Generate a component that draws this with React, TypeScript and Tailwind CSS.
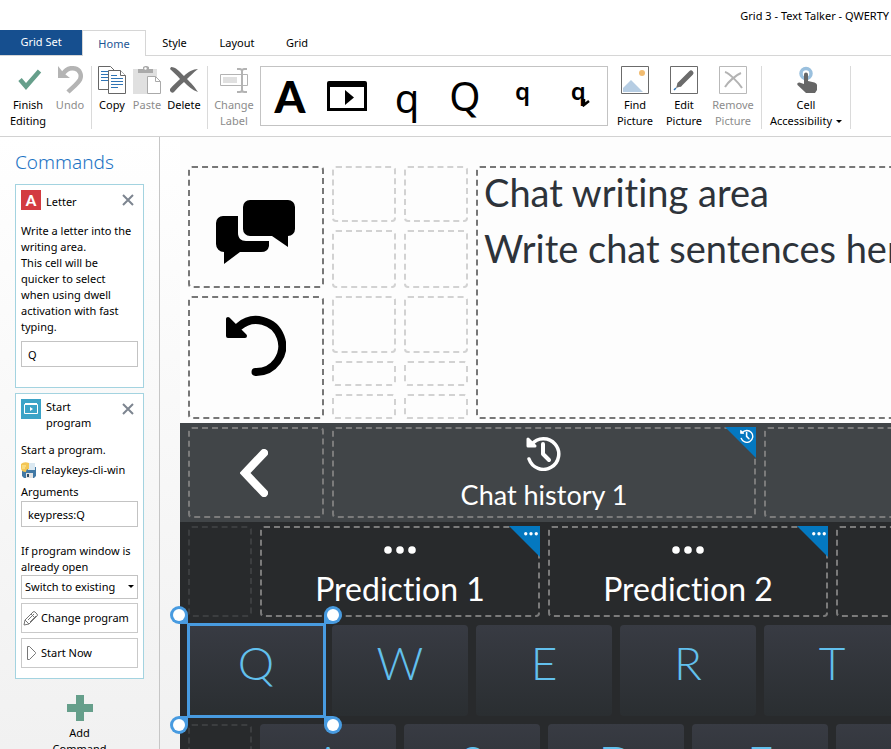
import React from "react";

type IconProps = { className?: string };

const ui = "font-['Noto_Sans','Open_Sans',sans-serif]";
const board = "font-['Lato','Open_Sans',sans-serif] [font-variant-ligatures:none]";

function CheckIcon() {
  return (
    <svg width="28" height="28" viewBox="0 0 28 28" fill="none" aria-hidden="true">
      <path d="M6 13.500l6 7L25.500 5" stroke="#669f8b" strokeWidth="4.500" />
    </svg>
  );
}

function UndoIcon() {
  return (
    <svg width="28" height="28" viewBox="0 0 28 28" fill="none" aria-hidden="true">
      <path d="M2 0v12h12L9.500 8.500 6 5z" fill="#b4b4b4" />
      <path d="M6.500 8.500C10 3 15 1.500 19 2.500c5 1.300 7 6.500 5 11-2 4-7 7.500-12 12.500" stroke="#b4b4b4" strokeWidth="4.500" />
    </svg>
  );
}

function CopyIcon() {
  return (
    <svg width="28" height="28" viewBox="0 0 28 28" fill="#fff" aria-hidden="true">
      <path d="M.5.5h12l4 4v19H.5z" stroke="#666" />
      <path d="M3 5.500h7M3 8.500h7M3 11.500h7M3 14.500h7" stroke="#2f74b5" />
      <path d="M10.500 4.500h12l5 5v18h-17z" stroke="#666" />
      <path d="M22.500 4.500v5h5" stroke="#666" />
      <path d="M13 9.500h6M13 12.500h12M13 15.500h12M13 18.500h12M13 21.500h7" stroke="#2f74b5" />
    </svg>
  );
}

function PasteIcon() {
  return (
    <svg width="28" height="28" viewBox="0 0 28 28" fill="none" aria-hidden="true">
      <path d="M0 3h24v25H0z" fill="#e0e0e0" />
      <path d="M5 3h5V1l2-1h2l2 1v2h4v4H5z" fill="#aaa" />
      <circle cx="12.500" cy="2.500" r="1.200" fill="#fff" />
      <path d="M14.500 10.500h8l5 5v12h-13z" fill="#fff" stroke="#aaa" />
      <path d="M22.500 10.500v5h5" stroke="#aaa" />
    </svg>
  );
}

function DeleteIcon() {
  return (
    <svg width="28" height="28" viewBox="0 0 28 28" fill="#6b6b6b" aria-hidden="true">
      <path d="M1 1C6 1 9 5 14 10 18 6 23 3 28 3 23 7 20 10 17 13 21 17 24 20 28 26 22 24 18 20 14 16 10 19 7 23 4 26 2 28-1 25 0 23 3 19 7 16 10 13 7 9 3 6 0 3z" />
    </svg>
  );
}

function LabelIcon() {
  return (
    <svg width="28" height="28" viewBox="0 0 28 28" fill="none" stroke="#b3b3b3" aria-hidden="true">
      <path d="M.5 8.500h27v11H.5z" />
      <path d="M3 11h14v6H3z" fill="#e0e0e0" stroke="none" />
      <path d="M22 3.500v23" strokeWidth="2" />
      <path d="M17 3h3l2 1 2-1h3M17 26h3l2-1 2 1h3" strokeWidth="2" />
    </svg>
  );
}

function FindPictureIcon() {
  return (
    <svg width="28" height="28" viewBox="0 0 28 28" fill="none" aria-hidden="true">
      <path d="M.5.5h27v27H.5z" stroke="#6b6b6b" fill="#fff" />
      <path d="M2 26v-4l8-8 12 12z" fill="#b6cde3" />
      <circle cx="21" cy="7" r="3" fill="#f2bc70" />
    </svg>
  );
}

function EditPictureIcon() {
  return (
    <svg width="28" height="28" viewBox="0 0 28 28" fill="none" aria-hidden="true">
      <path d="M.5.5h27v27H.5z" stroke="#6b6b6b" fill="#fff" />
      <path d="M10 18L21 7" stroke="#6b6b6b" strokeWidth="5" strokeLinecap="round" />
      <path d="M6 22l2-6 4 4z" fill="#6b6b6b" />
      <path d="M4 24l2-2" stroke="#2f74b5" strokeWidth="1.500" />
    </svg>
  );
}

function RemovePictureIcon() {
  return (
    <svg width="28" height="28" viewBox="0 0 28 28" fill="none" aria-hidden="true">
      <path d="M.5.5h27v27H.5z" stroke="#b9b9b9" fill="#fff" />
      <path d="M6 6c4 1 13 10 17 16M22 7C17 9 9 16 6 21" stroke="#b3b3b3" strokeWidth="2" />
    </svg>
  );
}

function TouchIcon() {
  return (
    <svg width="28" height="28" viewBox="0 0 28 28" fill="none" aria-hidden="true">
      <circle cx="14" cy="7.500" r="5" stroke="#9ac0de" strokeWidth="3.500" />
      <path d="M12 8.500a2 2 0 0 1 4 0V15l6.500 1.500q3 1 2.500 4V24l-2 3H14l-8.500-8q-1-2.500 2-2.500L12 18z" fill="#666" />
    </svg>
  );
}

function WindowIcon() {
  return (
    <svg width="40" height="30" viewBox="0 0 40 30" aria-hidden="true">
      <path d="M2 0h36a2 2 0 0 1 2 2v28H0V2a2 2 0 0 1 2-2zM3 6v21h34V6z" fillRule="evenodd" />
      <path d="M18 9v15l9-7.500z" />
    </svg>
  );
}

function ChatIcon() {
  return (
    <svg width="80" height="66" viewBox="0 0 80 66" aria-hidden="true">
      <path d="M34 0h38a7 7 0 0 1 7 7v22a7 7 0 0 1-7 7v11L56 36H34a7 7 0 0 1-7-7V7a7 7 0 0 1 7-7z" />
      <path d="M7 16h15v17c0 5 3 8 8 8h23v5q-1 6-8 6H24L8 64V52a8 8 0 0 1-8-8V23a7 7 0 0 1 7-7z" />
    </svg>
  );
}

function RotateIcon() {
  return (
    <svg width="60" height="62" viewBox="0 0 60 62" fill="none" aria-hidden="true">
      <path d="M13 11.500a26 26 0 1 1 16.500 45.500" stroke="#000" strokeWidth="8" strokeLinecap="round" />
      <path d="M2 4v17h17z" fill="#000" stroke="#000" strokeWidth="4" strokeLinejoin="round" />
    </svg>
  );
}

function HistoryIcon({ className }: IconProps) {
  return (
    <svg className={className} viewBox="0 0 36 36" fill="none" stroke="#fff" aria-hidden="true">
      <path d="M5.500 9.500A15.300 15.300 0 1 1 3 24" strokeWidth="3.500" strokeLinecap="round" />
      <path d="M2 4v7h7z" fill="#fff" strokeWidth="3" strokeLinejoin="round" />
      <path d="M17 9v10l6 6" strokeWidth="4" strokeLinecap="round" strokeLinejoin="round" />
    </svg>
  );
}

function DotsIcon({ className }: IconProps) {
  return (
    <svg className={className} viewBox="0 0 32 8" fill="#fff" aria-hidden="true">
      <circle cx="4" cy="4" r="3.800" />
      <circle cx="16" cy="4" r="3.800" />
      <circle cx="28" cy="4" r="3.800" />
    </svg>
  );
}

function ChevronIcon() {
  return (
    <svg width="28" height="48" viewBox="0 0 28 48" fill="none" aria-hidden="true">
      <path d="M24 4L5 24l19 20" stroke="#fff" strokeWidth="8" strokeLinecap="round" />
    </svg>
  );
}

function CloseIcon() {
  return (
    <svg width="12" height="12" viewBox="0 0 12 12" stroke="#7d8590" strokeWidth="2" aria-hidden="true">
      <path d="M1 1l10 10M11 1L1 11" />
    </svg>
  );
}

function ProgramFileIcon() {
  return (
    <svg className="shrink-0" width="16" height="16" viewBox="0 0 16 16" aria-hidden="true">
      <path d="M1 5h14v9l-2 2H3l-2-2z" fill="#4279a5" />
      <path d="M7 1h7v7H7z" fill="#dbe9f2" />
      <path d="M5 11h7v5H5z" fill="#e5e5e5" />
      <path d="M6 12h2v3H6z" fill="#344f66" />
      <path d="M0 2q3-3 8-1v6q-3 0-3 3-5 0-5-4z" fill="#f3c554" />
      <path d="M1 4h4M1 6h3" stroke="#fff0a8" />
    </svg>
  );
}

function PencilIcon() {
  return (
    <svg className="shrink-0" width="16" height="16" viewBox="0 0 16 16" fill="none" stroke="#777" aria-hidden="true">
      <path d="M1 15l1-5 8-8q1-1 2 0l2 2q1 1 0 2l-8 8zM2 10l4 4M5 10l6-6M7 12l6-6M8 4l4 4" />
    </svg>
  );
}

function PlayIcon() {
  return (
    <svg className="shrink-0" width="16" height="16" viewBox="0 0 16 16" fill="none" stroke="#777" aria-hidden="true">
      <path d="M4.500 1.500v13h2l6-6v-1l-6-6z" />
    </svg>
  );
}

function Tool({ icon, label, width, muted }: { icon: React.ReactNode; label: React.ReactNode; width: string; muted?: boolean }) {
  return (
    <button
      disabled={muted}
      className={`flex shrink-0 flex-col items-center gap-[3px] whitespace-nowrap leading-4 ${width} ${muted ? "text-[#8c8c8c]" : "text-black"}`}
    >
      {icon}
      <span>{label}</span>
    </button>
  );
}

function Separator() {
  return <div className="h-[63px] w-px shrink-0 self-start bg-[#dadada]" />;
}

function Ribbon() {
  return (
    <div className="flex h-[81px] shrink-0 items-start border-b border-[#d2d2d2] bg-white pt-[10px]">
      <div className="flex pr-[5px] pl-0.5">
        <Tool width="w-[52px]" icon={<CheckIcon />} label={<>Finish<br />Editing</>} />
        <Tool width="w-8" icon={<UndoIcon />} label="Undo" muted />
      </div>
      <Separator />
      <div className="flex pr-1 pl-[3px]">
        <Tool width="w-[34px]" icon={<CopyIcon />} label="Copy" />
        <Tool width="w-9" icon={<PasteIcon />} label="Paste" muted />
        <Tool width="w-[38px]" icon={<DeleteIcon />} label="Delete" />
      </div>
      <Separator />
      <div className="flex px-[3px]">
        <Tool width="w-[46px]" icon={<LabelIcon />} label={<>Change<br />Label</>} muted />
      </div>
      <div className="grid h-[60px] w-[348px] shrink-0 grid-cols-6 border border-[#c3c3c3] leading-none text-black">
        <button className="flex items-center justify-center font-['Lato',sans-serif] text-[44px] font-black leading-none">A</button>
        <button className="flex items-center justify-center" aria-label="Start program picture"><WindowIcon /></button>
        <button className="flex items-center justify-center pt-1 pl-1 text-[40px] leading-none">q</button>
        <button className="flex items-center justify-center pl-1 text-[40px] leading-none">Q</button>
        <button className="flex items-start justify-center pt-3 pl-1 text-[24px] font-semibold leading-none">q</button>
        <button className="flex items-start justify-center pt-3 text-[24px] font-semibold leading-none">
          <span className="relative">
            q
            <svg className="absolute -right-1 -bottom-1" width="8" height="8" viewBox="0 0 8 8" fill="none" stroke="#000" strokeWidth="2.500" aria-hidden="true">
              <path d="M2 0v6l5-4" />
            </svg>
          </span>
        </button>
      </div>
      <div className="flex gap-px pr-1 pl-[3px]">
        <Tool width="w-12" icon={<FindPictureIcon />} label={<>Find<br />Picture</>} />
        <Tool width="w-12" icon={<EditPictureIcon />} label={<>Edit<br />Picture</>} />
        <Tool width="w-12" icon={<RemovePictureIcon />} label={<>Remove<br />Picture</>} muted />
      </div>
      <Separator />
      <div className="flex px-px">
        <Tool
          width="w-[86px]"
          icon={<TouchIcon />}
          label={
            <>
              Cell<br />
              <span className="flex items-center gap-1">
                Accessibility
                <span className="border-x-[3px] border-t-[3px] border-x-transparent border-t-black" />
              </span>
            </>
          }
        />
      </div>
      <Separator />
    </div>
  );
}

function CommandCard({ tile, title, tall, children }: { tile: React.ReactNode; title: string; tall?: boolean; children: React.ReactNode }) {
  return (
    <section className="flex flex-col border border-[#a3d3e0] bg-white px-[5px] pt-[5px]">
      <header className="flex items-start">
        {tile}
        <h2 className={`ml-[5px] w-16 ${tall ? "" : "pt-1"}`}>{title}</h2>
        <button className="ml-auto mt-1 mr-1" aria-label={`Remove ${title}`}><CloseIcon /></button>
      </header>
      {children}
    </section>
  );
}

const field = "h-[26px] w-full border border-[#c3c3c3] bg-white px-1.5 text-[11px]";

function Sidebar() {
  return (
    <aside className="flex w-40 shrink-0 flex-col gap-[5px] overflow-hidden border-r border-[#c6c6c6] bg-linear-to-b from-white to-[#f1f1f1] px-[15px] leading-4 text-black">
      <h1 className="mt-3 mb-[3px] text-[19px] font-light leading-[27px] text-[#1c73c4]">Commands</h1>
      <CommandCard
        title="Letter"
        tile={<span className="flex size-5 items-center justify-center bg-[#d33b41] font-['Lato',sans-serif] text-[15px] font-black text-white">A</span>}
      >
        <label htmlFor="letter" className="mt-[13px]">
          Write a letter into the writing area.
          <br />
          This cell will be
          <br />
          quicker to select
          <br />
          when using dwell activation with fast typing.
        </label>
        <input id="letter" className={`mt-1.5 mb-5 ${field}`} defaultValue="Q" />
      </CommandCard>
      <CommandCard
        title="Start program"
        tall
        tile={
          <span className="flex size-5 items-center justify-center bg-[#3ba3c7]">
            <svg width="14" height="12" viewBox="0 0 14 12" fill="none" stroke="#fff" aria-hidden="true">
              <path d="M.5 1.500h13v9H.5z" />
              <path d="M1 1h12" strokeWidth="2" />
              <path d="M6 4v4l3-2z" fill="#fff" stroke="none" />
            </svg>
          </span>
        }
      >
        <p className="mt-[11px]">Start a program.</p>
        <p className="mt-1 flex items-center gap-1 whitespace-nowrap"><ProgramFileIcon />relaykeys-cli-win</p>
        <label htmlFor="arguments" className="mt-1.5">Arguments</label>
        <input id="arguments" className={`mt-px ${field}`} defaultValue="keypress:Q" />
        <label htmlFor="when-open" className="mt-4 -mr-1">If program window is<br />already open</label>
        <div className="relative">
          <select id="when-open" className="h-6 w-full appearance-none border border-[#c3c3c3] bg-white pl-[3px] text-[11px]">
            <option>Switch to existing</option>
          </select>
          <span className="pointer-events-none absolute top-[10px] right-1 border-x-[3px] border-t-[3px] border-x-transparent border-t-black" />
        </div>
        <button className="mt-1 flex h-[30px] items-center gap-0.5 border border-[#c9c9c9] pl-px whitespace-nowrap"><PencilIcon />Change program</button>
        <button className="mt-[5px] mb-[10px] flex h-[30px] items-center gap-0.5 border border-[#c9c9c9] pl-px"><PlayIcon />Start Now</button>
      </CommandCard>
      <button className="mt-[11px] flex flex-col items-center gap-1">
        <svg width="26" height="26" viewBox="0 0 26 26" aria-hidden="true">
          <path d="M9 0h8v9h9v8h-9v9H9v-9H0V9h9z" fill="#669f8b" />
        </svg>
        <span>Add<br />Command</span>
      </button>
    </aside>
  );
}

function Corner({ children }: { children: React.ReactNode }) {
  return (
    <span className="absolute -top-0.5 -right-0.5 size-[31px]">
      <svg className="absolute inset-0" viewBox="0 0 31 31" aria-hidden="true">
        <path d="M0 0h31v31z" fill="#0478c0" />
      </svg>
      {children}
    </span>
  );
}

const cell = "rounded-[4px] border-2 border-dashed";
const tracks = "grid grid-cols-[repeat(14,64px)] gap-x-2 pl-2";

function Key({ letter, selected }: { letter: string; selected?: boolean }) {
  return (
    <button
      className={`relative col-span-2 h-[91px] rounded-[4px] bg-linear-to-b from-[#383b43] to-[#2a2e31] pb-[15px] text-[46px] font-light leading-none text-[#62c0ed] ${selected ? "z-10" : ""}`}
    >
      {letter}
      {selected && (
        <span className="absolute -inset-y-0.5 -right-0.5 -left-px border-[3px] border-[#489be0]">
          <Handle className="-top-5 -left-5 rounded-br-none" />
          <Handle className="-top-5 -right-[19px] rounded-bl-none" />
          <Handle className="-bottom-[19px] -left-5 rounded-tr-none" />
          <Handle className="-right-[19px] -bottom-[19px] rounded-tl-none" />
        </span>
      )}
    </button>
  );
}

function Handle({ className }: IconProps) {
  return (
    <span className={`absolute flex size-[18px] items-center justify-center rounded-full bg-[#489be0] ${className}`}>
      <span className="size-3 rounded-full bg-white" />
    </span>
  );
}

function Prediction({ n }: { n: number }) {
  return (
    <button className={`relative col-span-4 flex flex-col items-center border-[#7b7b7b] pt-[18px] text-[32px] leading-9 text-white ${cell}`}>
      <DotsIcon className="h-2 w-8" />
      <span className="mt-[17px]">Prediction {n}</span>
      <Corner><DotsIcon className="absolute top-1.5 right-0.5 w-3.5" /></Corner>
    </button>
  );
}

function Board() {
  return (
    <main className={`min-w-0 flex-1 overflow-hidden bg-linear-to-b from-white to-[#f1f1f1] pl-5 ${board}`}>
      <div className="w-max">
        <div className={`${tracks} grid-rows-[56px_58px_57px_25px_25px] gap-y-2 bg-[#fdfdfd] pt-[29px] pb-1`}>
          <button aria-label="Chat" className={`col-span-2 row-span-2 flex items-center justify-center border-[#777] pt-3 ${cell}`}><ChatIcon /></button>
          <div className={`border-[#d2d2d2] ${cell}`} />
          <div className={`border-[#d2d2d2] ${cell}`} />
          <div className={`col-span-10 row-span-5 border-[#777] px-1.5 text-[38px] leading-14 text-[#2d333a] ${cell}`}>
            <p className="-mt-1">Chat writing area</p>
            <p>Write chat sentences here</p>
          </div>
          <div className={`border-[#d2d2d2] ${cell}`} />
          <div className={`border-[#d2d2d2] ${cell}`} />
          <button aria-label="Undo" className={`col-span-2 row-span-3 flex items-start justify-center border-[#777] pt-[17px] ${cell}`}><RotateIcon /></button>
          {Array.from({ length: 6 }, (_, i) => (
            <div key={i} className={`border-[#d2d2d2] ${cell}`} />
          ))}
        </div>

        <div className={`${tracks} auto-rows-[91px] bg-[#414548] py-1`}>
          <button aria-label="Back" className={`col-span-2 flex items-center justify-center border-[#7b7b7b] pr-1 ${cell}`}><ChevronIcon /></button>
          <button className={`relative col-span-6 flex flex-col items-center border-[#7b7b7b] pt-1.5 text-[27px] leading-8 text-white ${cell}`}>
            <HistoryIcon className="size-9" />
            <span className="mt-2">Chat history 1</span>
            <Corner><HistoryIcon className="absolute top-0.5 right-0.5 size-3.5" /></Corner>
          </button>
          <div className={`col-span-6 border-[#7b7b7b] ${cell}`} />
        </div>

        <div className={`${tracks} auto-rows-[91px] gap-y-2 bg-[#282a2c] py-1`}>
          <div className={`border-[#3c3e40] ${cell}`} />
          <Prediction n={1} />
          <Prediction n={2} />
          <div className={`col-span-4 border-[#7b7b7b] ${cell}`} />
          <div className={`border-[#3c3e40] ${cell}`} />
          <Key letter="Q" selected />
          {["W", "E", "R", "T", "Y", "U"].map((letter) => (
            <Key key={letter} letter={letter} />
          ))}
          <div className={`border-[#3c3e40] ${cell}`} />
          {["A", "S", "D", "F", "G", "H"].map((letter) => (
            <Key key={letter} letter={letter} />
          ))}
        </div>
      </div>
    </main>
  );
}

export default function App() {
  return (
    <div className={`flex h-screen flex-col overflow-hidden bg-white text-[11px] ${ui}`}>
      <div className="flex h-[30px] shrink-0 items-center justify-end pt-0.5 pr-0.5 text-black">Grid 3 - Text Talker - QWERTY</div>
      <nav className="flex h-[26px] shrink-0 border-b border-[#d6d6d6] text-black">
        <button className="w-[82px] bg-[#164f8f] text-white">Grid Set</button>
        <button className="-mb-px w-16 border border-b-0 border-[#d6d6d6] bg-white pt-px text-[#1c5594]">Home</button>
        <button className="w-[57px] pt-0.5">Style</button>
        <button className="w-[68px] pt-0.5">Layout</button>
        <button className="w-[52px] pt-0.5">Grid</button>
      </nav>
      <Ribbon />
      <div className="flex min-h-0 flex-1">
        <Sidebar />
        <Board />
      </div>
    </div>
  );
}
